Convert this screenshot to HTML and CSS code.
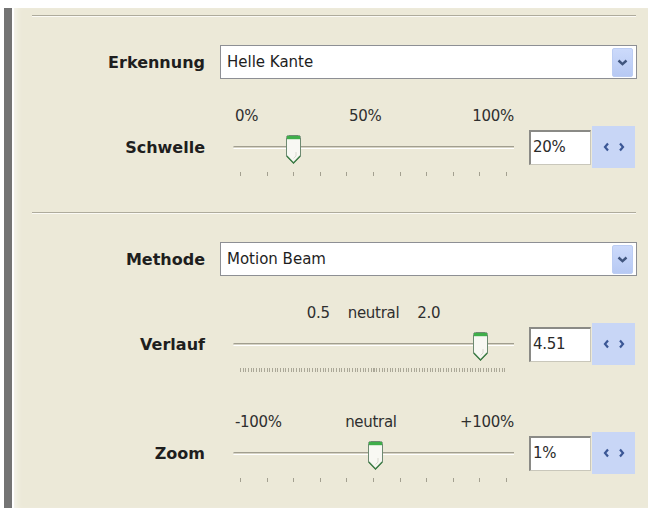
FILE: index.html
```html
<!DOCTYPE html>
<html lang="de">
<head>
<meta charset="utf-8">
<title>Einstellungen</title>
<link rel="stylesheet" href="styles.css">
</head>
<body>
<div class="frame">
  <div class="edge"></div>
  <div class="panel">
    <div class="sep"></div>

    <div class="combo-row">
      <div class="label">Erkennung</div>
      <div class="combo">
        <span class="combo-text">Helle Kante</span>
        <span class="drop"><svg width="11" height="7" viewBox="0 0 11 7"><path d="M1.5 1.5 L5.5 5.2 L9.5 1.5" fill="none" stroke="#40557e" stroke-width="2.4"/></svg></span>
      </div>
    </div>

    <div class="slider-row first">
      <div class="label slabel">Schwelle</div>
      <div class="scale spread"><span>0%</span><span>50%</span><span>100%</span></div>
      <div class="track-area">
        <div class="track"></div>
        <div class="thumb-lane">
          <svg class="thumb" style="left:20%" width="17" height="31" viewBox="0 0 17 31"><path d="M1.5 3.5 Q1.5 1.5 3.5 1.5 H13.5 Q15.5 1.5 15.5 3.5 V22 L8.5 29.5 L1.5 22 Z" fill="#f8f8f3" stroke="#6e8a72"/><path d="M11 18 V22 L8.5 24.5" fill="none" stroke="#d8d8cf"/><rect x="2" y="2" width="13" height="3.2" fill="#3fae4a"/><path d="M1.8 22 L8.5 29 L15.2 22" fill="none" stroke="#3f7f48" stroke-width="1.4"/></svg>
        </div>
      </div>
      <div class="ticks"><i></i><i></i><i></i><i></i><i></i><i></i><i></i><i></i><i></i><i></i><i></i></div>
      <div class="spin">
        <div class="spin-box">20%</div>
        <div class="spin-btn"><svg width="22" height="10" viewBox="0 0 22 10"><path d="M5 1.5 L2 5 L5 8.5" fill="none" stroke="#3b5795" stroke-width="2.2"/><path d="M17 1.5 L20 5 L17 8.5" fill="none" stroke="#3b5795" stroke-width="2.2"/></svg></div>
      </div>
    </div>

    <div class="sep sep2"></div>

    <div class="combo-row">
      <div class="label">Methode</div>
      <div class="combo">
        <span class="combo-text">Motion Beam</span>
        <span class="drop"><svg width="11" height="7" viewBox="0 0 11 7"><path d="M1.5 1.5 L5.5 5.2 L9.5 1.5" fill="none" stroke="#40557e" stroke-width="2.4"/></svg></span>
      </div>
    </div>

    <div class="slider-row second">
      <div class="label slabel">Verlauf</div>
      <div class="scale centered"><span>0.5</span><span>neutral</span><span>2.0</span></div>
      <div class="track-area">
        <div class="track"></div>
        <div class="thumb-lane">
          <svg class="thumb" style="left:90%" width="17" height="31" viewBox="0 0 17 31"><path d="M1.5 3.5 Q1.5 1.5 3.5 1.5 H13.5 Q15.5 1.5 15.5 3.5 V22 L8.5 29.5 L1.5 22 Z" fill="#f8f8f3" stroke="#6e8a72"/><path d="M11 18 V22 L8.5 24.5" fill="none" stroke="#d8d8cf"/><rect x="2" y="2" width="13" height="3.2" fill="#3fae4a"/><path d="M1.8 22 L8.5 29 L15.2 22" fill="none" stroke="#3f7f48" stroke-width="1.4"/></svg>
        </div>
      </div>
      <div class="ticks dense"></div>
      <div class="spin">
        <div class="spin-box">4.51</div>
        <div class="spin-btn"><svg width="22" height="10" viewBox="0 0 22 10"><path d="M5 1.5 L2 5 L5 8.5" fill="none" stroke="#3b5795" stroke-width="2.2"/><path d="M17 1.5 L20 5 L17 8.5" fill="none" stroke="#3b5795" stroke-width="2.2"/></svg></div>
      </div>
    </div>

    <div class="slider-row third">
      <div class="label slabel">Zoom</div>
      <div class="scale spread"><span>-100%</span><span>neutral</span><span>+100%</span></div>
      <div class="track-area">
        <div class="track"></div>
        <div class="thumb-lane">
          <svg class="thumb" style="left:50.5%" width="17" height="31" viewBox="0 0 17 31"><path d="M1.5 3.5 Q1.5 1.5 3.5 1.5 H13.5 Q15.5 1.5 15.5 3.5 V22 L8.5 29.5 L1.5 22 Z" fill="#f8f8f3" stroke="#6e8a72"/><path d="M11 18 V22 L8.5 24.5" fill="none" stroke="#d8d8cf"/><rect x="2" y="2" width="13" height="3.2" fill="#3fae4a"/><path d="M1.8 22 L8.5 29 L15.2 22" fill="none" stroke="#3f7f48" stroke-width="1.4"/></svg>
        </div>
      </div>
      <div class="ticks"><i></i><i></i><i></i><i></i><i></i><i></i><i></i><i></i><i></i><i></i><i></i></div>
      <div class="spin">
        <div class="spin-box">1%</div>
        <div class="spin-btn"><svg width="22" height="10" viewBox="0 0 22 10"><path d="M5 1.5 L2 5 L5 8.5" fill="none" stroke="#3b5795" stroke-width="2.2"/><path d="M17 1.5 L20 5 L17 8.5" fill="none" stroke="#3b5795" stroke-width="2.2"/></svg></div>
      </div>
    </div>
  </div>
</div>
</body>
</html>
```

FILE: styles.css
```css
html, body {
  margin: 0;
  padding: 0;
  background: #ffffff;
}

body {
  font-family: "DejaVu Sans", Verdana, sans-serif;
  color: #2a2a2a;
}

.frame {
  display: flex;
  padding: 8px 0 0 4px;
  height: 500px;
}

.edge {
  width: 8px;
  background: #747474;
  flex: none;
}

.panel {
  flex: 1;
  margin-left: 2px;
  background: #ece9d8;
  padding: 7px 11px 0 0;
  box-shadow: inset 6px 0 6px -4px #f6f5ee;
}

.sep {
  margin-left: 18px;
  margin-right: 1px;
  border-top: 1px solid #aeab9c;
  border-bottom: 1px solid #fbfaf5;
}

.sep2 {
  margin-top: 29px;
}

.label {
  width: 191px;
  text-align: right;
  font-weight: bold;
  font-size: 16px;
  color: #1e1e1e;
}

.combo-row {
  display: flex;
  align-items: center;
  gap: 15px;
  margin-top: 28px;
}

.combo {
  flex: 1;
  height: 34px;
  box-sizing: border-box;
  border: 1px solid #8d8f94;
  background: #ffffff;
  display: flex;
  align-items: center;
  justify-content: space-between;
  padding: 0 3px 0 6px;
}

.combo-text {
  font-size: 15px;
  color: #1e1e1e;
}

.drop {
  width: 21px;
  height: 29px;
  box-sizing: border-box;
  border: 1px solid #bccdf3;
  border-radius: 2px;
  background: linear-gradient(#ccdafb, #b7c9f3);
  display: flex;
  align-items: center;
  justify-content: center;
}

.slider-row {
  display: grid;
  grid-template-columns: 191px 28px 281px 15px auto;
  grid-template-rows: 18px 34px 14px;
  row-gap: 5px;
  margin-top: 28px;
}

.slider-row.third {
  margin-top: 33px;
}

.slabel {
  grid-column: 1;
  grid-row: 2;
  align-self: center;
}

.scale {
  grid-column: 3;
  grid-row: 1;
  display: flex;
  font-size: 15px;
  line-height: 18px;
  color: #2f2f2f;
  letter-spacing: -0.3px;
}

.scale.spread {
  justify-content: space-between;
  padding: 0 0 0 2px;
}

.scale.centered {
  justify-content: center;
  gap: 18px;
}

.track-area {
  grid-column: 3;
  grid-row: 2;
  position: relative;
}

.track {
  position: absolute;
  left: 0;
  right: 0;
  top: 16px;
  height: 3px;
  box-sizing: border-box;
  border-top: 1px solid #a19e8f;
  border-bottom: 1px solid #ffffff;
  background: #d6d3c4;
  border-radius: 2px 0 0 2px;
}

.thumb-lane {
  position: absolute;
  left: 7px;
  right: 7px;
  top: 4px;
  height: 31px;
}

.thumb {
  position: absolute;
  top: 0;
  margin-left: -8px;
}

.ticks {
  grid-column: 3;
  grid-row: 3;
  display: flex;
  justify-content: space-between;
  margin: 3px 7px 0 7px;
  height: 4px;
}

.ticks i {
  width: 1px;
  height: 4px;
  background: #a3a090;
}

.ticks.dense {
  margin-top: 2px;
  background: repeating-linear-gradient(90deg, #aaa797 0 1px, transparent 1px 2.67px);
}

.spin {
  grid-column: 5;
  grid-row: 2;
  align-self: center;
  display: flex;
  align-items: center;
  gap: 1px;
}

.spin-box {
  width: 62px;
  height: 35px;
  box-sizing: border-box;
  background: #ffffff;
  border-top: 2px solid #8a8a86;
  border-left: 2px solid #8a8a86;
  border-right: 1px solid #c9c7bb;
  border-bottom: 1px solid #c9c7bb;
  font-size: 15px;
  line-height: 30px;
  padding-left: 2px;
  color: #2a2a2a;
  letter-spacing: -0.3px;
}

.spin-btn {
  width: 43px;
  height: 42px;
  background: #c8d6f6;
  display: flex;
  align-items: center;
  justify-content: center;
}
```
